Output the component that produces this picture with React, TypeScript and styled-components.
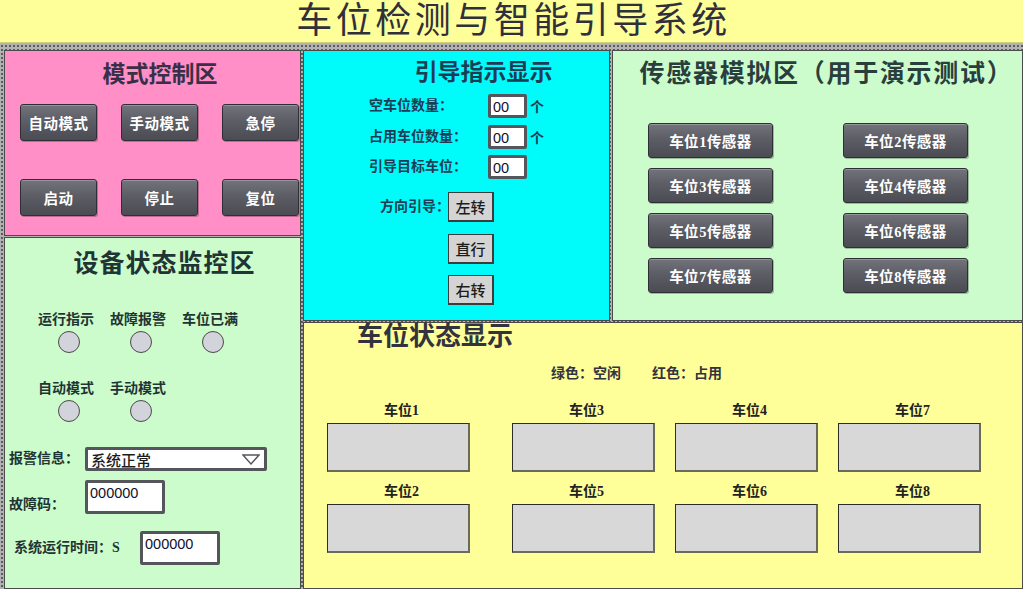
import styled, { createGlobalStyle } from "styled-components";

const GlobalStyle = createGlobalStyle`
  html, body {
    margin: 0;
    padding: 0;
  }
  body {
    font-family: "Noto Sans CJK SC", sans-serif;
  }
  * {
    box-sizing: border-box;
  }
`;

const CJK = `"Noto Sans CJK SC", sans-serif`;
const MIXED = `"Liberation Serif", "Noto Sans CJK SC", serif`;
const DIGITS = `"Liberation Sans", "Noto Sans CJK SC", sans-serif`;

const Screen = styled.div`
  width: 1023px;
  height: 589px;
  overflow: hidden;
  display: flex;
  flex-direction: column;
  background-color: #b2b2b2;
  background-image: radial-gradient(circle, #5a5a5a 0.7px, transparent 1.1px);
  background-size: 4px 4px;
`;

const Header = styled.header`
  height: 43px;
  flex: none;
  display: flex;
  justify-content: center;
  align-items: center;
  background: #ffff99;
  border-bottom: 1px solid #d2d27c;
`;

const AppTitle = styled.h1`
  margin: 0;
  padding-left: 4px;
  font-family: ${DIGITS};
  font-size: 36px;
  font-weight: 400;
  line-height: 40px;
  letter-spacing: 3.5px;
  color: #30303c;
`;

const Board = styled.main`
  flex: 1;
  display: grid;
  grid-template-columns: 297px 307px 1fr;
  grid-template-rows: 186px 84px 1fr;
  grid-template-areas:
    "mode guide sensor"
    "status guide sensor"
    "status park park";
  gap: 1px 2px;
  padding: 7px 0 0 4px;
`;

const Panel = styled.section<{ $area: string; $bg: string; $ink: string }>`
  grid-area: ${(p) => p.$area};
  background: ${(p) => p.$bg};
  color: ${(p) => p.$ink};
  border: 1px solid #4b4b4b;
  display: flex;
  flex-direction: column;
  min-height: 0;
`;

const PanelTitle = styled.h2<{
  $size: number;
  $top: number;
  $shift?: number;
  $align?: string;
  $spacing?: number;
}>`
  margin: ${(p) => p.$top}px 0 0 0;
  padding-left: ${(p) => p.$shift ?? 0}px;
  font-family: ${CJK};
  font-size: ${(p) => p.$size}px;
  font-weight: 600;
  line-height: ${(p) => p.$size + 3}px;
  letter-spacing: ${(p) => p.$spacing ?? 0}px;
  text-align: ${(p) => p.$align ?? "center"};
  white-space: nowrap;
`;

/* dark raised push buttons (mode control, sensor simulation) */
const DarkButton = styled.button<{ $w: number; $h: number }>`
  width: ${(p) => p.$w}px;
  height: ${(p) => p.$h}px;
  padding: 0;
  border: 1px solid #2e2f35;
  border-radius: 3px;
  background: linear-gradient(#72737b 0%, #5c5d65 45%, #4a4b53 100%);
  box-shadow: inset 0 1px 0 rgba(255, 255, 255, 0.25), 1px 1px 0 rgba(0, 0, 0, 0.25);
  color: #ffffff;
  font-family: ${MIXED};
  font-size: 14.5px;
  font-weight: 700;
  letter-spacing: 0.5px;
  cursor: pointer;
`;

const ModeGrid = styled.div`
  display: grid;
  grid-template-columns: repeat(3, 77px);
  grid-auto-rows: 37px;
  column-gap: 24px;
  row-gap: 38px;
  margin: 19px 0 0 15px;
`;

/* status monitor */
const LampGrid = styled.div<{ $top: number }>`
  display: grid;
  grid-template-columns: repeat(3, 72px);
  margin: ${(p) => p.$top}px 0 0 28px;
`;

const Lamp = styled.div`
  display: flex;
  flex-direction: column;
  align-items: center;
  gap: 4px;
`;

const LampLabel = styled.span`
  margin-right: 6px;
  font-family: ${CJK};
  font-size: 14px;
  font-weight: 700;
  line-height: 18px;
  white-space: nowrap;
`;

const LampDot = styled.span`
  width: 22px;
  height: 22px;
  border-radius: 50%;
  background: #d3d3db;
  border: 1.5px solid #4a4a4a;
`;

const FormRow = styled.div<{ $top: number; $indent: number; $label: number; $align: string }>`
  display: grid;
  grid-template-columns: ${(p) => p.$label}px auto;
  align-items: ${(p) => p.$align};
  margin: ${(p) => p.$top}px 0 0 ${(p) => p.$indent}px;
`;

const FieldLabel = styled.span`
  font-family: ${MIXED};
  font-size: 14px;
  font-weight: 700;
  line-height: 18px;
  white-space: nowrap;
`;

const Select = styled.div`
  width: 182px;
  height: 24px;
  display: flex;
  align-items: center;
  justify-content: space-between;
  padding: 0 4px 0 3px;
  background: #ffffff;
  border: 3px solid #55565c;
  border-radius: 2px;
  font-family: ${CJK};
  font-size: 15px;
  font-weight: 500;
  color: #1d1d1d;
`;

const ValueBox = styled.div<{ $w: number; $h: number }>`
  width: ${(p) => p.$w}px;
  height: ${(p) => p.$h}px;
  padding: 1px 0 0 2px;
  background: #ffffff;
  border: 3px solid #55565c;
  border-radius: 2px;
  font-family: ${DIGITS};
  font-size: 14.5px;
  line-height: 18px;
  color: #101030;
`;

/* guidance panel */
const CountGrid = styled.div`
  display: grid;
  grid-template-columns: 119px 39px auto;
  grid-auto-rows: 24px;
  row-gap: 6.5px;
  align-items: center;
  margin: 11px 0 0 65px;
`;

const Unit = styled.span`
  padding-left: 3px;
  font-family: ${CJK};
  font-size: 14px;
  font-weight: 700;
`;

const DirectionGrid = styled.div`
  display: grid;
  grid-template-columns: 68px 46px;
  grid-auto-rows: 30px;
  row-gap: 11.5px;
  align-items: center;
  margin: 13px 0 0 76px;
`;

const LightButton = styled.button`
  grid-column: 2;
  width: 46px;
  height: 30px;
  padding: 0;
  background: #d4d4d4;
  border: 1px solid #3c3c3c;
  border-bottom-width: 2px;
  border-right-width: 2px;
  font-family: ${CJK};
  font-size: 15px;
  font-weight: 500;
  color: #1c1c1c;
  cursor: pointer;
`;

const SensorGrid = styled.div`
  display: grid;
  grid-template-columns: repeat(2, 125px);
  grid-auto-rows: 35px;
  column-gap: 70px;
  row-gap: 10px;
  margin: 38px 0 0 35px;
`;

/* parking status */
const Legend = styled.div`
  display: flex;
  gap: 31px;
  margin: 15px 0 0 247px;
  font-family: ${CJK};
  font-size: 14px;
  font-weight: 700;
  line-height: 18px;
`;

const SlotGrid = styled.div`
  display: grid;
  grid-template-columns: 165px repeat(3, 143px);
  grid-template-rows: 70px 70px;
  grid-auto-flow: column;
  column-gap: 20px;
  row-gap: 11px;
  margin: 21px 0 0 23px;
`;

const Slot = styled.div`
  width: 143px;
  display: flex;
  flex-direction: column;
  gap: 3px;
`;

const SlotName = styled.span`
  padding-left: 6px;
  text-align: center;
  font-family: ${MIXED};
  font-size: 14px;
  font-weight: 700;
  line-height: 18px;
  color: #222222;
`;

const SlotBox = styled.div<{ $state: "idle" | "free" | "taken" }>`
  height: 49px;
  background: ${(p) => (p.$state === "free" ? "#39d439" : p.$state === "taken" ? "#e03030" : "#d8d8d8")};
  border: 1px solid #2c2c2c;
  border-right: 2px solid #6a6a5a;
  border-bottom: 2px solid #6a6a5a;
`;

const modeButtons = ["自动模式", "手动模式", "急停", "启动", "停止", "复位"];

const sensors = [1, 2, 3, 4, 5, 6, 7, 8];

// slots are laid out column by column: 1/2, 3/5, 4/6, 7/8
const slots = [1, 2, 3, 5, 4, 6, 7, 8];

const counts = [
  { label: "空车位数量：", value: "00", unit: "个" },
  { label: "占用车位数量：", value: "00", unit: "个" },
  { label: "引导目标车位：", value: "00", unit: "" },
];

export default function App() {
  return (
    <>
      <GlobalStyle />
      <Screen>
        <Header>
          <AppTitle>车位检测与智能引导系统</AppTitle>
        </Header>
        <Board>
          <Panel $area="mode" $bg="#ff8fc6" $ink="#3a2f48">
            <PanelTitle $size={23} $top={8} $shift={15}>
              模式控制区
            </PanelTitle>
            <ModeGrid>
              {modeButtons.map((name) => (
                <DarkButton key={name} $w={77} $h={37}>
                  {name}
                </DarkButton>
              ))}
            </ModeGrid>
          </Panel>

          <Panel $area="status" $bg="#ccfccc" $ink="#1f3434">
            <PanelTitle $size={25} $top={9} $shift={24} $spacing={1}>
              设备状态监控区
            </PanelTitle>
            <LampGrid $top={34}>
              {["运行指示", "故障报警", "车位已满"].map((name) => (
                <Lamp key={name}>
                  <LampLabel>{name}</LampLabel>
                  <LampDot />
                </Lamp>
              ))}
            </LampGrid>
            <LampGrid $top={25}>
              {["自动模式", "手动模式"].map((name) => (
                <Lamp key={name}>
                  <LampLabel>{name}</LampLabel>
                  <LampDot />
                </Lamp>
              ))}
            </LampGrid>
            <FormRow $top={25} $indent={4} $label={76} $align="center">
              <FieldLabel>报警信息：</FieldLabel>
              <Select>
                <span>系统正常</span>
                <svg width="18" height="11" viewBox="0 0 18 11">
                  <polygon points="1,1 17,1 9,10" fill="none" stroke="#55565c" strokeWidth="1.4" />
                </svg>
              </Select>
            </FormRow>
            <FormRow $top={9} $indent={4} $label={76} $align="end">
              <FieldLabel>故障码：</FieldLabel>
              <ValueBox $w={80} $h={34}>000000</ValueBox>
            </FormRow>
            <FormRow $top={17} $indent={9} $label={126} $align="center">
              <FieldLabel>系统运行时间：S</FieldLabel>
              <ValueBox $w={80} $h={34}>000000</ValueBox>
            </FormRow>
          </Panel>

          <Panel $area="guide" $bg="#00fbfb" $ink="#1d3d55">
            <PanelTitle $size={23} $top={6} $shift={54}>
              引导指示显示
            </PanelTitle>
            <CountGrid>
              {counts.map((row) => (
                <>
                  <FieldLabel key={row.label}>{row.label}</FieldLabel>
                  <ValueBox $w={39} $h={24}>
                    {row.value}
                  </ValueBox>
                  <Unit>{row.unit}</Unit>
                </>
              ))}
            </CountGrid>
            <DirectionGrid>
              <FieldLabel>方向引导：</FieldLabel>
              <LightButton>左转</LightButton>
              <LightButton>直行</LightButton>
              <LightButton>右转</LightButton>
            </DirectionGrid>
          </Panel>

          <Panel $area="sensor" $bg="#ccfccc" $ink="#2a3e3e">
            <PanelTitle $size={25} $top={6} $shift={18} $spacing={1.7}>
              传感器模拟区（用于演示测试）
            </PanelTitle>
            <SensorGrid>
              {sensors.map((n) => (
                <DarkButton key={n} $w={125} $h={35}>
                  车位{n}传感器
                </DarkButton>
              ))}
            </SensorGrid>
          </Panel>

          <Panel $area="park" $bg="#ffff99" $ink="#333340">
            <PanelTitle $size={26} $top={-4} $shift={53} $align="left">
              车位状态显示
            </PanelTitle>
            <Legend>
              <span>绿色：空闲</span>
              <span>红色：占用</span>
            </Legend>
            <SlotGrid>
              {slots.map((n) => (
                <Slot key={n}>
                  <SlotName>车位{n}</SlotName>
                  <SlotBox $state="idle" />
                </Slot>
              ))}
            </SlotGrid>
          </Panel>
        </Board>
      </Screen>
    </>
  );
}
